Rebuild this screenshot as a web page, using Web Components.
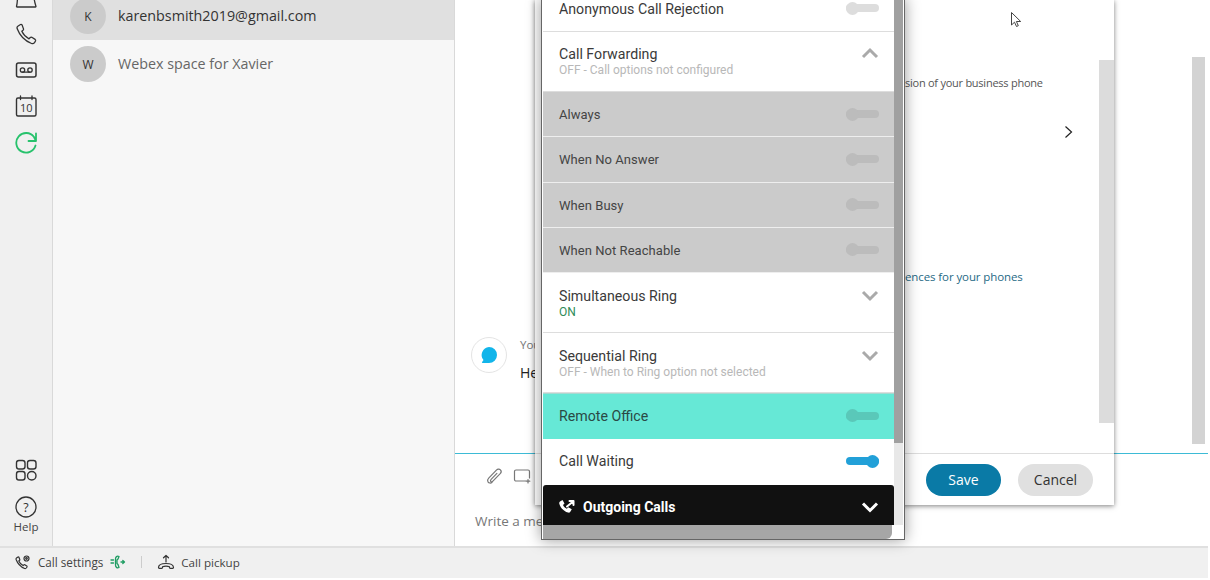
<!DOCTYPE html>
<html>
<head>
<meta charset="utf-8">
<title>Call settings</title>
<style>
  html, body { margin: 0; padding: 0; background: #fff; overflow: hidden; }
  body { font-family: "Open Sans", "Liberation Sans", sans-serif; }
</style>
</head>
<body>
<app-shell>
  <side-rail slot="rail"></side-rail>
  <space-list slot="list">
    <space-item initial="K" selected>karenbsmith2019@gmail.com</space-item>
    <space-item initial="W">Webex space for Xavier</space-item>
  </space-list>
  <chat-pane slot="main">
    <settings-dialog></settings-dialog>
  </chat-pane>
  <status-bar slot="status"></status-bar>
  <call-popup slot="popup">
    <call-row class="first" type="toggle">Anonymous Call Rejection</call-row>
    <call-row class="forward" type="up" tall>Call Forwarding<span slot="sub">OFF - Call options not configured</span></call-row>
    <call-row type="toggle" tone="grey">Always</call-row>
    <call-row type="toggle" tone="grey">When No Answer</call-row>
    <call-row type="toggle" tone="grey">When Busy</call-row>
    <call-row type="toggle" tone="grey">When Not Reachable</call-row>
    <call-row type="down" tall>Simultaneous Ring<span slot="sub" style="color:#2e8b57">ON</span></call-row>
    <call-row type="down" tall>Sequential Ring<span slot="sub">OFF - When to Ring option not selected</span></call-row>
    <call-row type="toggle" tone="teal">Remote Office</call-row>
    <call-row type="toggle" on>Call Waiting</call-row>
    <section-bar>Outgoing Calls</section-bar>
  </call-popup>
</app-shell>

<script>
class AppShell extends HTMLElement {
  constructor() {
    super()
    this.attachShadow({ mode: "open" })
    this.shadowRoot.innerHTML = `
      <style>
        :host { display: flex; flex-direction: column; width: 1208px; height: 578px; position: relative; overflow: hidden; }
        .top { flex: 1; display: flex; min-height: 0; }
      </style>
      <div class="top">
        <slot name="rail"></slot>
        <slot name="list"></slot>
        <slot name="main"></slot>
      </div>
      <slot name="status"></slot>
      <slot name="popup"></slot>
    `
  }
}

class SideRail extends HTMLElement {
  constructor() {
    super()
    this.attachShadow({ mode: "open" })
    this.shadowRoot.innerHTML = `
      <style>
        :host { display: flex; flex-direction: column; justify-content: space-between; width: 52px; flex: none; background: #f0f0f0; border-right: 1px solid #d9d9d9; color: #333; box-sizing: content-box; }
        .group { display: flex; flex-direction: column; align-items: center; }
        .top { margin-top: -14px; gap: 12px; }
        .bottom { padding-bottom: 12px; }
        svg { display: block; width: 24px; height: 24px; fill: none; stroke: currentColor; stroke-width: 1.3; stroke-linecap: round; stroke-linejoin: round; }
        .help { font-size: 11.5px; line-height: 14px; color: #444; margin-top: 1px; }
        .apps { margin-bottom: 13px; }
      </style>
      <div class="group top">
        <svg viewBox="0 0 24 24"><path d="M3.500 10C3.500 15 3 18.500 2.500 20.500q0 .5.500.5H21.500q.5 0 .5-.5C21.500 18.500 20 15 20 10"/></svg>
        <svg viewBox="0 0 24 24"><path d="M6.500 2.500 3.800 4.200c-.8.6-1 1.500-.7 2.400C5.500 13 11 19 17.500 21.500c1.300.4 2.300.1 3-.8l1-1.700c.3-.6.100-1.200-.4-1.600l-3.300-2.100c-.6-.3-1.100-.2-1.500.2l-1.300 1.300c-3-1.500-5.800-4.500-7.200-7.500l1.300-1.100c.5-.4.600-1 .3-1.600L8 2.800c-.4-.5-1-.6-1.500-.3z"/></svg>
        <svg viewBox="0 0 24 24"><rect x="2.500" y="5" width="19.500" height="14" rx="2" stroke-width="1.500"/><circle cx="8.500" cy="12" r="2.200"/><circle cx="16" cy="12" r="2.200"/><path d="M8.500 14.200H16"/></svg>
        <svg viewBox="0 0 24 24"><rect x="2.500" y="4" width="19.500" height="18" rx="1.500" stroke-width="1.400"/><path d="M6.500 2v3.500M18 2v3.500"/><text x="12.200" y="18" text-anchor="middle" font-family="Open Sans" font-size="11" fill="#333" stroke="none">10</text></svg>
        <svg viewBox="0 0 24 24" style="color:#27c26c;stroke-width:1.800"><path d="M21.500 15.500a9.800 9.800 0 1 1-1.500-8.500L22 11M22 3.500V11h-7.500"/></svg>
      </div>
      <div class="group bottom">
        <svg class="apps" viewBox="0 0 24 24" style="stroke-width:1.400"><rect x="2.500" y="2.500" width="8.500" height="8.500" rx="2.500"/><rect x="13.500" y="2.500" width="8.500" height="8.500" rx="2.500"/><rect x="2.500" y="13.500" width="8.500" height="8.500" rx="2.500"/><circle cx="17.750" cy="17.750" r="4.250"/></svg>
        <svg viewBox="0 0 24 24"><circle cx="12" cy="12" r="10"/><text x="12" y="16.500" text-anchor="middle" font-family="Open Sans" font-size="12.500" fill="#333" stroke="none">?</text></svg>
        <span class="help">Help</span>
      </div>
    `
  }
}

class SpaceList extends HTMLElement {
  constructor() {
    super()
    this.attachShadow({ mode: "open" })
    this.shadowRoot.innerHTML = `
      <style>
        :host { display: block; width: 401px; flex: none; background: #f7f7f7; border-right: 1px solid #d9d9d9; }
        .inner { margin-top: -8px; }
      </style>
      <div class="inner"><slot></slot></div>
    `
  }
}

class SpaceItem extends HTMLElement {
  constructor() {
    super()
    this.attachShadow({ mode: "open" })
    this.shadowRoot.innerHTML = `
      <style>
        :host { display: flex; align-items: center; gap: 12px; height: 48px; padding-left: 17px; font-size: 14.3px; color: #666; }
        :host([selected]) { background: #e0e0e0; color: #333; }
        .avatar { width: 36px; height: 36px; border-radius: 50%; background: #cbcbcb; color: #333; font-size: 12px; display: flex; align-items: center; justify-content: center; flex: none; }
        .name { padding-bottom: 1px; }
      </style>
      <span class="avatar">${this.getAttribute("initial")}</span>
      <span class="name"><slot></slot></span>
    `
  }
}

class ChatPane extends HTMLElement {
  constructor() {
    super()
    this.attachShadow({ mode: "open" })
    this.shadowRoot.innerHTML = `
      <style>
        :host { flex: 1; display: flex; flex-direction: column; background: #fff; position: relative; min-width: 0; }
        .thread { flex: none; height: 453px; display: flex; }
        .rule { flex: none; height: 1px; background: #3dbbd6; }
        .msgs { flex: 1; padding: 337px 0 0 16px; display: flex; gap: 13px; box-sizing: border-box; }
        .bubble { width: 34px; height: 34px; border: 1px solid #e4e4e4; border-radius: 50%; display: flex; align-items: center; justify-content: center; flex: none; }
        .who { font-size: 11.500px; line-height: 16px; color: #777; }
        .text { font-size: 14px; line-height: 20px; margin-top: 10px; color: #222; }
        .bar { width: 13px; height: 387px; margin: 57px 3px 0 0; background: #d3d3d3; }
        .tools { display: flex; gap: 9px; padding: 13px 0 0 31px; color: #777; }
        .tools svg { width: 18px; height: 18px; fill: none; stroke: currentColor; stroke-width: 1.200; stroke-linecap: round; stroke-linejoin: round; }
        .write { margin: 26px 0 0 20px; font-size: 13.500px; line-height: 20px; color: #777; }
      </style>
      <div class="thread">
        <div class="msgs">
          <div class="bubble">
            <svg width="18" height="18" viewBox="0 0 18 18"><path fill="#12b5ea" d="M9 1a8 8 0 0 1 0 16H2.500c-.6 0-.7-.5-.4-.9l1.400-2A8 8 0 0 1 9 1z"/></svg>
          </div>
          <div><div class="who">You</div><div class="text">He</div></div>
        </div>
        <div class="bar"></div>
      </div>
      <div class="rule"></div>
      <div class="tools">
        <svg viewBox="0 0 18 18"><path d="M6 15.500c-1.500 1-3.200.6-4-.6-.7-1.200-.4-2.700.7-3.800l7.700-8c1.200-1.200 3-1.300 4-.3s.9 2.700-.2 3.900l-7.300 7.500c-.7.700-1.600.8-2.100.3-.5-.6-.4-1.400.3-2.100l5.800-6"/></svg>
        <svg viewBox="0 0 18 18"><path d="M13 14H3a1.500 1.500 0 0 1-1.500-1.500v-8A1.500 1.500 0 0 1 3 3h12a1.500 1.500 0 0 1 1.500 1.500V11M15 12.500V16M13.200 14.200h3.600"/></svg>
      </div>
      <div class="write">Write a me</div>
      <slot></slot>
    `
  }
}

class SettingsDialog extends HTMLElement {
  constructor() {
    super()
    this.attachShadow({ mode: "open" })
    this.shadowRoot.innerHTML = `
      <style>
        :host { position: absolute; left: 80px; top: 0; width: 579px; height: 505px; background: #fff; display: flex; flex-direction: column; box-shadow: 0 1px 5px rgba(0,0,0,.5); box-sizing: border-box; font-size: 11px; color: #555; }
        .body { flex: none; height: 453px; display: flex; border-bottom: 1px solid #ddd; box-sizing: content-box; }
        .content { flex: 1; padding: 75px 0 0 370px; display: flex; flex-direction: column; }
        .line { line-height: 16px; white-space: nowrap; letter-spacing: -.25px; }
        .next { align-self: flex-end; margin: 34px 26px 0 0; display: block; }
        .link { margin-top: 130px; color: #1f6a85; font-size: 11.500px; letter-spacing: -.1px; }
        .scroll { width: 15px; height: 363px; margin-top: 60px; background: #dcdcdc; }
        .foot { flex: 1; display: flex; align-items: center; justify-content: flex-end; gap: 17px; padding: 0 21px; }
        .btn { width: 75px; height: 32px; border-radius: 16px; display: flex; align-items: center; justify-content: center; font-size: 14px; }
        .save { background: #0a7aa6; color: #fff; }
        .cancel { background: #e0e0e0; color: #333; }
        .pointer { position: absolute; left: 475px; top: 11px; }
      </style>
      <div class="body">
        <div class="content">
          <div class="line">sion of your business phone</div>
          <svg class="next" width="9" height="14" viewBox="0 0 9 14"><path d="M1.500 1.500 7.500 7l-6 5.500" fill="none" stroke="#222" stroke-width="1.200"/></svg>
          <div class="line link">ences for your phones</div>
        </div>
        <div class="scroll"></div>
      </div>
      <div class="foot">
        <span class="btn save">Save</span>
        <span class="btn cancel">Cancel</span>
      </div>
      <svg class="pointer" width="14" height="18" viewBox="0 0 14 18"><path d="M1.500 1.500v12.500l3-2.800 2 4.300 1.800-.8-1.900-4.200h4.300z" fill="#fff" stroke="#444" stroke-width="1"/></svg>
    `
  }
}

class StatusBar extends HTMLElement {
  constructor() {
    super()
    this.attachShadow({ mode: "open" })
    this.shadowRoot.innerHTML = `
      <style>
        :host { display: flex; align-items: center; height: 32px; flex: none; background: #f0f0f0; border-top: 2px solid #e0e0e0; box-sizing: border-box; padding: 0 0 2px 15px; font-size: 11.700px; color: #444; }
        svg { display: block; fill: none; stroke: #333; stroke-width: 1.200; stroke-linecap: round; stroke-linejoin: round; flex: none; }
        .sep { width: 1px; height: 12px; background: #ccc; margin: 0 15px 0 15px; }
        .pickup { font-size: 11.600px; }
      </style>
      <svg width="16" height="16" viewBox="0 0 16 16" style="margin-right:7px"><path d="M3 3 1.500 4c-.5.4-.6.900-.4 1.500 1.500 4 4.500 7.300 8.500 9 .7.200 1.300 0 1.700-.5l.7-1c.2-.4.100-.7-.2-1l-2-1.300c-.3-.2-.7-.1-.9.100l-.8.800c-1.800-1-3.500-2.800-4.300-4.600l.8-.7c.3-.2.300-.6.200-.9L3.900 3.200C3.700 2.900 3.300 2.800 3 3z"/><circle cx="11.500" cy="4.500" r="2.500"/><circle cx="11.500" cy="4.500" r=".8"/></svg>
      <span>Call settings</span>
      <svg width="16" height="14" viewBox="0 0 16 14" style="margin-left:7px;stroke:#1f9d63;stroke-width:1.300"><path d="M1 5h2.500M1 8h2.500M9 1.500C7 .5 5.500 2 5.500 4v6c0 2 1.500 3.500 3.500 2.500L8 9.500 7 8.500V5l1-1zM11 7h3M12.800 5.500 14.500 7l-1.700 1.500"/></svg>
      <span class="sep"></span>
      <svg width="18" height="16" viewBox="0 0 18 16" style="margin-right:6px"><path d="M9 8V1.500M6.500 3.800 9 1.500l2.500 2.300M1.500 13.500c0-2.500 3-4 7.500-4s7.500 1.500 7.500 4c0 .5-.3.800-.8.800h-2.400c-.5 0-.8-.3-.8-.8v-.8c-1-.4-2.400-.6-3.500-.6s-2.500.2-3.500.6v.8c0 .5-.3.800-.8.800H2.300c-.5 0-.8-.3-.8-.8z"/></svg>
      <span class="pickup">Call pickup</span>
    `
  }
}

class CallPopup extends HTMLElement {
  constructor() {
    super()
    this.attachShadow({ mode: "open" })
    this.shadowRoot.innerHTML = `
      <style>
        :host { position: absolute; left: 541px; top: -2px; width: 364px; height: 542px; background: #fff; border: 1px solid #666; border-top: none; box-sizing: border-box; box-shadow: 0 0 14px rgba(0,0,0,.4); font-family: Roboto, "Liberation Sans", sans-serif; overflow: hidden; display: grid; grid-template-columns: 351px 9px; grid-template-rows: 527px 14px; padding-left: 1px; }
        .list { overflow: hidden; display: flex; flex-direction: column; }
        .vtrack { background: #e8e8e8; }
        .vthumb { width: 100%; height: 445px; background: #a0a0a0; }
        .hthumb { background: #a6a6a6; border-radius: 0 0 6px 0; margin-right: 2px; }
      </style>
      <div class="list"><slot></slot></div>
      <div class="vtrack"><div class="vthumb"></div></div>
      <div class="hthumb"></div>
    `
  }
}

class CallRow extends HTMLElement {
  constructor() {
    super()
    this.attachShadow({ mode: "open" })
    const type = this.getAttribute("type")
    const chevron = type === "up" ? "M2 11 9 4l7 7" : "M2 4l7 7 7-7"
    const side = type === "toggle"
      ? `<span class="switch"><span class="track"></span><span class="knob"></span></span>`
      : `<svg class="chev" width="18" height="14" viewBox="0 0 18 14"><path d="${chevron}" fill="none" stroke="#aaa" stroke-width="3"/></svg>`
    this.shadowRoot.innerHTML = `
      <style>
        :host { display: flex; align-items: center; justify-content: space-between; flex: none; height: 46px; padding: 0 15px 0 16px; box-sizing: border-box; background: #fff; color: #3a3a3a; font-size: 14.200px; --track: #dddddd; }
        :host(.first) { height: 47px; margin-top: -13px; border-bottom: 1px solid #ddd; }
        :host(.first) .label { padding-top: 2px; }
        :host([tall]) { height: 60px; align-items: flex-start; padding-top: 14px; border-bottom: 1px solid #ddd; }
        :host(.forward) { padding-top: 13px; }
        :host(.forward) .chev { margin-top: 2px; }
        :host([tone="grey"]) { height: 45.250px; background: #cbcbcb; border-bottom: 1px solid #eee; font-size: 13px; letter-spacing: .05px; color: #444; --track: #bcbcbc; }
        :host([tone="grey"]) .label { padding-top: 2px; }
        :host([tone="teal"]) { background: #66e8d6; border-top: 1px solid #a8d8d0; padding-bottom: 2px; color: #2a4a45; --track: #5ac8b9; }
        :host([on]) { --track: #22a0d8; padding-bottom: 2px; }
        .label { line-height: 18px; }
        .sub { font-size: 12px; line-height: 14px; color: #b8b8b8; }
        .switch { position: relative; display: block; width: 33px; height: 13px; }
        .track { position: absolute; left: 0; right: 0; top: 2.500px; height: 8px; border-radius: 4px; background: var(--track); }
        .knob { position: absolute; left: 0; top: 0; width: 13px; height: 13px; border-radius: 50%; background: var(--track); }
        :host([on]) .knob { left: 20px; }
        :host([tall]) .chev { margin-top: 1px; }
      </style>
      <div class="label"><slot></slot><div class="sub"><slot name="sub"></slot></div></div>
      ${side}
    `
  }
}

class SectionBar extends HTMLElement {
  constructor() {
    super()
    this.attachShadow({ mode: "open" })
    this.shadowRoot.innerHTML = `
      <style>
        :host { display: flex; align-items: center; flex: none; height: 40px; background: #111; color: #fff; border-radius: 3px 3px 0 0; padding: 4px 15px 0 15px; box-sizing: border-box; font-weight: 700; font-size: 14px; }
        .title { flex: 1; margin-left: 6px; }
        svg { display: block; }
      </style>
      <svg width="19" height="16" viewBox="0 0 19 16"><path fill="#fff" d="M2 2.500 4.500 1l2 3.500L5 6c.8 1.800 2 3 3.800 3.800L10.300 8.300l3.500 2-1.500 2.500c-.5.8-1.300 1-2.200.8C6 12.500 2.500 9 1.300 4.700c-.2-.9 0-1.700.7-2.200z"/><path fill="none" stroke="#fff" stroke-width="2" stroke-linejoin="round" stroke-linecap="round" d="M9 7.500 14.500 3M11.500 2h4v4"/></svg>
      <span class="title"><slot></slot></span>
      <svg width="18" height="12" viewBox="0 0 18 12"><path d="M2 2.500l7 7 7-7" fill="none" stroke="#fff" stroke-width="3"/></svg>
    `
  }
}

customElements.define("side-rail", SideRail)
customElements.define("space-list", SpaceList)
customElements.define("space-item", SpaceItem)
customElements.define("chat-pane", ChatPane)
customElements.define("settings-dialog", SettingsDialog)
customElements.define("status-bar", StatusBar)
customElements.define("call-popup", CallPopup)
customElements.define("call-row", CallRow)
customElements.define("section-bar", SectionBar)
customElements.define("app-shell", AppShell)
</script>
</body>
</html>
